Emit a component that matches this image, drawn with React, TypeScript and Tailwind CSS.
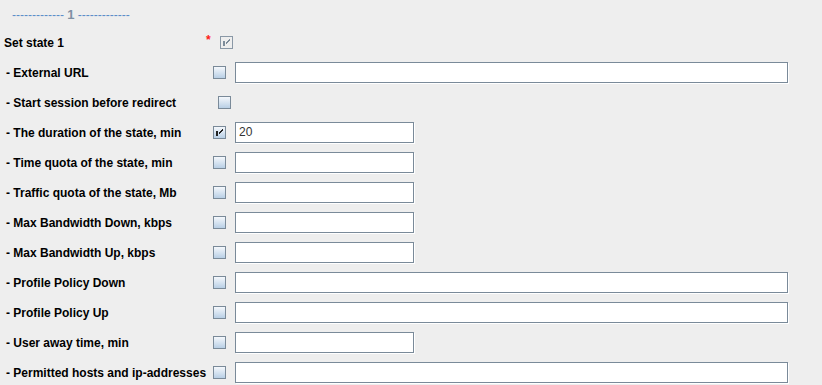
import React from 'react';

type Row = {
  label: string;
  input?: 'short' | 'long';
  checked?: boolean;
  value?: string;
  labelWidth?: string;
};

const rows: Row[] = [
  { label: '- External URL', input: 'long' },
  { label: '- Start session before redirect', labelWidth: 'w-[218px]' },
  { label: '- The duration of the state, min', input: 'short', checked: true, value: '20' },
  { label: '- Time quota of the state, min', input: 'short' },
  { label: '- Traffic quota of the state, Mb', input: 'short' },
  { label: '- Max Bandwidth Down, kbps', input: 'short' },
  { label: '- Max Bandwidth Up, kbps', input: 'short' },
  { label: '- Profile Policy Down', input: 'long' },
  { label: '- Profile Policy Up', input: 'long' },
  { label: '- User away time, min', input: 'short' },
  { label: '- Permitted hosts and ip-addresses', input: 'long' },
];

// Metal-style check mark
const Check = ({ color }: { color: string }) => (
  <svg width="13" height="13" viewBox="0 0 13 13" className="absolute left-[-1px] top-[-1px]" shapeRendering="crispEdges">
    <rect x="3" y="5" width="2" height="5" fill={color} />
    <path d="M9.5 3.5 L5.5 7.5 M9.5 4.5 L5.5 8.5" stroke={color} strokeWidth="1" fill="none" />
  </svg>
);

const CheckBox = ({ checked, disabled }: { checked?: boolean; disabled?: boolean }) => (
  <div
    className={`relative w-[13px] h-[13px] shrink-0 border ${
      disabled
        ? 'border-[#8a98a6] bg-[#eeeeee]'
        : 'border-[#7a8a99] bg-gradient-to-b from-[#f5f8fc] to-[#b8cfe5]'
    }`}
  >
    {checked && <Check color={disabled ? '#7d8c9a' : '#222222'} />}
  </div>
);

const Field = ({ size, value }: { size: 'short' | 'long'; value?: string }) => (
  <div
    className={`${size === 'long' ? 'w-[553px]' : 'w-[179px]'} h-[21px] ml-[9px] bg-white border border-[#7a8a99] shadow-[1px_1px_0_#ffffff] flex items-center pl-[3px] text-[12px] text-[#333333]`}
  >
    {value}
  </div>
);

const App: React.FC = () => {
  return (
    <div className="w-[822px] h-[385px] bg-[#eeeeee] overflow-hidden font-['Liberation_Sans',Arial,sans-serif]">
      {/* Section header */}
      <div className="h-[27px] flex items-center pl-[12px] pt-[2px] text-[12px] text-[#5b8cc8] whitespace-pre">
        <span>------------- </span>
        <span className="font-bold text-[13px] text-[#7f90a4]">1</span>
        <span> -------------</span>
      </div>

      {/* Set state row */}
      <div className="h-[30px] flex items-center">
        <div className="w-[204px] shrink-0 pl-[4px] pt-[2px] text-[12px] font-bold text-black">Set state 1</div>
        <span className="w-[16px] shrink-0 text-[12px] font-bold text-[#ff1a1a] leading-none -mt-[4px] pl-[2px]">*</span>
        <CheckBox checked disabled />
      </div>

      {rows.map((r) => (
        <div key={r.label} className="h-[30px] flex items-center">
          <div className={`${r.labelWidth ?? 'w-[213px]'} shrink-0 pl-[6px] pt-[2px] text-[12px] font-bold text-black whitespace-nowrap`}>
            {r.label}
          </div>
          <CheckBox checked={r.checked} />
          {r.input && <Field size={r.input} value={r.value} />}
        </div>
      ))}
    </div>
  );
};

export default App;
